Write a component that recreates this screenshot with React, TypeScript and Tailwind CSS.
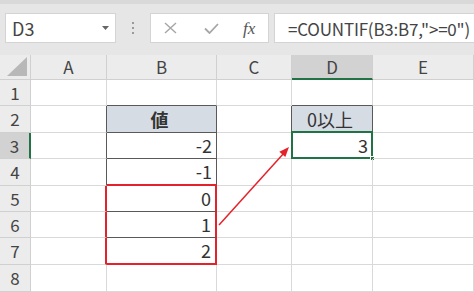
import React from "react";

const rowHeights = ["h-[26px]", "h-[27px]", "h-[26px]", "h-[27px]", "h-[26px]", "h-[26px]", "h-[27px]", "h-[27px]"];
const cols = ["A", "B", "C", "D", "E"];

type CellInfo = { text?: string; align?: string; bg?: string; bold?: boolean };

const content: Record<string, CellInfo> = {
  B2: { text: "値", align: "justify-center", bg: "bg-[#d6dce4]", bold: true },
  B3: { text: "-2" },
  B4: { text: "-1" },
  B5: { text: "0" },
  B6: { text: "1" },
  B7: { text: "2" },
  D2: { text: "0以上", align: "justify-center", bg: "bg-[#d6dce4]" },
  D3: { text: "3" },
};

function rightBorder(c: string, r: number): string {
  if ((c === "A" || c === "B") && r >= 2 && r <= 4) return "border-r border-r-[#595959]";
  if ((c === "A" || c === "B") && r >= 5 && r <= 7) return "border-r-2 border-r-[#e5212b]";
  if ((c === "C" || c === "D") && r === 2) return "border-r border-r-[#595959]";
  return "border-r border-r-[#d9d9d9]";
}

function bottomBorder(c: string, r: number): string {
  if (c === "B") {
    if (r === 1 || r === 2 || r === 3 || r === 5 || r === 6) return "border-b border-b-[#595959]";
    if (r === 4 || r === 7) return "border-b-2 border-b-[#e5212b]";
  }
  if (c === "D" && (r === 1 || r === 2)) return "border-b border-b-[#595959]";
  return "border-b border-b-[#d9d9d9]";
}

export default function App() {
  return (
    <div
      className="relative w-[474px] h-[292px] overflow-hidden bg-white text-[#333]"
      style={{ fontFamily: '"Noto Sans CJK JP", "Noto Sans", sans-serif' }}
    >
      {/* Formula bar area */}
      <div className="h-[55px] bg-[#e6e6e6] flex flex-col">
        <div className="h-[4px] bg-[#d9d9d9]" />
        <div className="flex items-start pt-[9px] pl-[5px]">
          <div className="w-[111px] h-[30px] bg-white border border-[#d4d4d4] flex items-center justify-between pl-[6px] pr-[6px]">
            <span className="text-[18px] leading-none text-[#444]">D3</span>
            <svg width="7" height="4" viewBox="0 0 7 4">
              <polygon points="0,0 7,0 3.5,4" fill="#666" />
            </svg>
          </div>
          <div className="w-[34px] h-[30px] flex flex-col items-center justify-center gap-[3px]">
            <div className="w-[2px] h-[2px] bg-[#9a9a9a]" />
            <div className="w-[2px] h-[2px] bg-[#9a9a9a]" />
            <div className="w-[2px] h-[2px] bg-[#9a9a9a]" />
          </div>
          <div className="w-[119px] h-[30px] bg-white border border-[#d4d4d4] flex items-center">
            <svg className="ml-[13px]" width="13" height="12" viewBox="0 0 13 12">
              <path d="M1 1 L12 11 M12 1 L1 11" stroke="#a6a6a6" strokeWidth="1.4" fill="none" />
            </svg>
            <svg className="ml-[27px]" width="15" height="11" viewBox="0 0 15 11">
              <path d="M1 5.5 L5.5 10 L14 1" stroke="#a6a6a6" strokeWidth="1.8" fill="none" />
            </svg>
            <span
              className="ml-[24px] text-[17px] italic leading-none text-[#555]"
              style={{ fontFamily: '"Liberation Serif", serif' }}
            >
              fx
            </span>
          </div>
          <div className="ml-[5px] flex-1 h-[30px] bg-white border border-[#d4d4d4] border-r-0 flex items-center pl-[13px] overflow-hidden whitespace-nowrap">
            <span className="text-[17px] leading-none text-[#444] tracking-[-0.2px]">=COUNTIF(B3:B7,"&gt;=0")</span>
          </div>
        </div>
      </div>

      {/* Sheet grid */}
      <div className="grid grid-cols-[31px_76px_110px_75px_81px_1fr]">
        <div className="h-[25px] bg-[#ececec] border-r border-b border-[#d0d0d0] flex items-end justify-end pr-[3px] pb-[3px]">
          <svg width="20" height="19" viewBox="0 0 20 19">
            <polygon points="20,0 20,19 0,19" fill="#b8b8b8" />
          </svg>
        </div>
        {cols.map((c) =>
          c === "D" ? (
            <div
              key={c}
              className="h-[25px] bg-[#d2d2d2] border-r border-r-[#d0d0d0] border-b-2 border-b-[#217346] flex items-center justify-center text-[17px] text-[#444]"
            >
              {c}
            </div>
          ) : (
            <div
              key={c}
              className="h-[25px] bg-[#ececec] border-r border-b border-[#d0d0d0] flex items-center justify-center text-[17px] text-[#444]"
            >
              {c}
            </div>
          )
        )}

        {rowHeights.map((h, i) => {
          const r = i + 1;
          return (
            <React.Fragment key={r}>
              {r === 3 ? (
                <div className={`${h} bg-[#d2d2d2] border-b border-b-[#d0d0d0] border-r-2 border-r-[#217346] flex items-center justify-center text-[17px] text-[#444]`}>
                  {r}
                </div>
              ) : (
                <div className={`${h} bg-[#ececec] border-b border-r border-[#d0d0d0] flex items-center justify-center text-[17px] text-[#444]`}>
                  {r}
                </div>
              )}
              {cols.map((c) => {
                const key = `${c}${r}`;
                const info = content[key];
                const isSel = key === "D3";
                return (
                  <div
                    key={key}
                    className={`${h} relative flex items-center ${info?.align ?? "justify-end"} pr-[4px] ${info?.bg ?? ""} ${rightBorder(c, r)} ${bottomBorder(c, r)} text-[18px] ${info?.bold ? "font-bold" : ""}`}
                  >
                    {info?.text}
                    {isSel && (
                      <>
                        <div className="absolute -top-[2px] -left-[1px] -right-[1px] -bottom-[1px] border-2 border-[#217346]" />
                        <div className="absolute -right-[3px] -bottom-[3px] w-[5px] h-[5px] bg-[#217346] border border-white" />
                      </>
                    )}
                  </div>
                );
              })}
            </React.Fragment>
          );
        })}
      </div>

      {/* annotation arrow */}
      <svg className="absolute left-0 top-0 pointer-events-none" width="474" height="292" viewBox="0 0 474 292">
        <line x1="219" y1="225" x2="284" y2="153" stroke="#e5212b" strokeWidth="1.5" />
        <polygon points="289,147 285.3,157.1 279.3,151.7" fill="#e5212b" />
      </svg>
    </div>
  );
}
